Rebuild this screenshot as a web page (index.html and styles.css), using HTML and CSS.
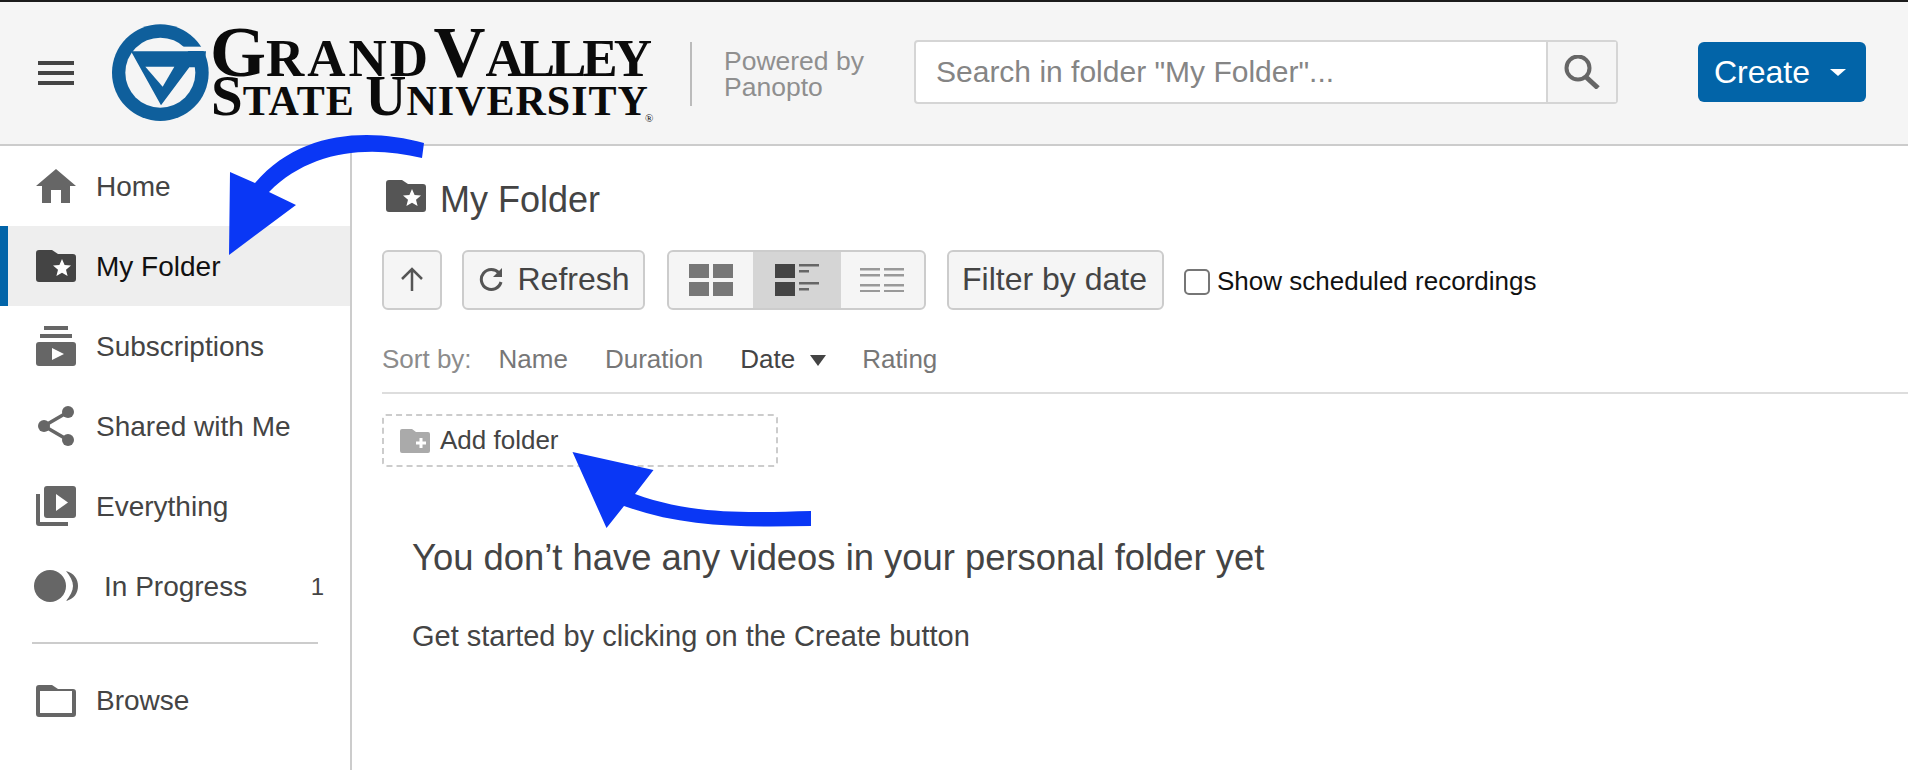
FILE: index.html
```html
<!DOCTYPE html>
<html lang="en">
<head>
    <meta charset="UTF-8">
    <meta name="viewport" content="width=device-width, initial-scale=1.0">
    <title>My Folder</title>
    <link rel="stylesheet" href="styles.css">
</head>
<body>
    <header class="topbar">
        <div class="hamburger"><span></span><span></span><span></span></div>
        <div class="logo">
            <svg class="logo-mark" viewBox="0 0 330 330" width="110" height="110">
                <circle cx="163" cy="164" r="145" fill="#0f5f9c"/>
                <circle cx="163" cy="164" r="105" fill="#f5f5f5"/>
                <rect x="215" y="86" width="100" height="13" fill="#f5f5f5"/>
                <polygon points="75,100 300,100 295,148 250,148 165,262" fill="#0f5f9c"/>
                <polygon points="118,146 205,146 170,206" fill="#f5f5f5"/>
            </svg>
            <div class="logo-text">
                <div class="logo-line"><span class="lg-big">G</span><span class="lg-rand">RAND</span> <span class="lg-big lg-v">V</span><span class="lg-alley">ALLEY</span></div>
                <div class="logo-line"><span class="lg-big2">S</span><span class="lg-small2">TATE</span> <span class="lg-big2 lg-u">U</span><span class="lg-small2">NIVERSITY</span><span class="lg-reg">®</span></div>
            </div>
        </div>
        <div class="powered">Powered by<br>Panopto</div>
        <div class="search">
            <input class="search-input" type="text" placeholder="Search in folder &quot;My Folder&quot;...">
            <div class="search-btn">
                <svg viewBox="0 0 36 34" width="36" height="34"><circle cx="14" cy="13" r="11.5" fill="none" stroke="#666" stroke-width="4"/><path d="M22 22 L34 33" stroke="#666" stroke-width="5" fill="none"/></svg>
            </div>
        </div>
        <button class="create">Create<span class="caret"></span></button>
    </header>

    <div class="layout">
        <nav class="sidebar">
            <a class="nav-item">
                <svg class="nav-icon" viewBox="0 0 40 34" width="40" height="34"><path d="M20 0 L40 17 H34 V34 H25 V21 H15 V34 H6 V17 H0 Z"/></svg>
                <span>Home</span>
            </a>
            <a class="nav-item active">
                <svg class="nav-icon" viewBox="0 0 40 32" width="40" height="32"><path d="M3 0 H16 L22 4 H37 a3 3 0 0 1 3 3 V29 a3 3 0 0 1 -3 3 H3 a3 3 0 0 1 -3 -3 V3 a3 3 0 0 1 3 -3 Z"/><polygon fill="#fff" points="26,9 28.6,15 35,15.5 30,19.8 31.6,26 26,22.8 20.4,26 22,19.8 17,15.5 23.4,15"/></svg>
                <span>My Folder</span>
            </a>
            <a class="nav-item">
                <svg class="nav-icon" viewBox="0 0 40 40" width="40" height="40"><rect x="8" y="0" width="24" height="4"/><rect x="4" y="8" width="32" height="4"/><rect x="0" y="16" width="40" height="24" rx="3"/><polygon fill="#fff" points="16,22 28,28 16,34"/></svg>
                <span>Subscriptions</span>
            </a>
            <a class="nav-item">
                <svg class="nav-icon share" viewBox="0 0 36 40" width="36" height="40"><path d="M30 6 L6 20 L30 34" fill="none" stroke="#666" stroke-width="3.5"/><circle cx="30" cy="6" r="6"/><circle cx="6" cy="20" r="6"/><circle cx="30" cy="34" r="6"/></svg>
                <span>Shared with Me</span>
            </a>
            <a class="nav-item">
                <svg class="nav-icon" viewBox="0 0 40 40" width="40" height="40"><rect x="8" y="0" width="32" height="32" rx="3"/><path d="M0 8 H4 V36 H32 V40 H3 a3 3 0 0 1 -3 -3 Z"/><polygon fill="#fff" points="20,8 32,16.5 20,25"/></svg>
                <span>Everything</span>
            </a>
            <a class="nav-item progress">
                <svg class="nav-icon" viewBox="0 0 44 32" width="44" height="32"><circle cx="16" cy="16" r="16"/><path d="M32 1 C40 3 44 9 44 16 C44 23 40 29 32 31 C36 26 39 21 39 16 C39 11 36 6 32 1 Z"/></svg>
                <span>In Progress</span>
                <span class="count">1</span>
            </a>
            <div class="nav-divider"></div>
            <a class="nav-item">
                <svg class="nav-icon" viewBox="0 0 40 32" width="40" height="32"><path fill-rule="evenodd" d="M3 0 H16 L22 4 H37 a3 3 0 0 1 3 3 V29 a3 3 0 0 1 -3 3 H3 a3 3 0 0 1 -3 -3 V3 a3 3 0 0 1 3 -3 Z M4 6 V28 H36 V6 Z"/></svg>
                <span>Browse</span>
            </a>
        </nav>

        <main class="content">
            <div class="title-row">
                <svg viewBox="0 0 40 32" width="40" height="32" fill="#555"><path d="M3 0 H16 L22 4 H37 a3 3 0 0 1 3 3 V29 a3 3 0 0 1 -3 3 H3 a3 3 0 0 1 -3 -3 V3 a3 3 0 0 1 3 -3 Z"/><polygon fill="#fff" points="26,9 28.6,15 35,15.5 30,19.8 31.6,26 26,22.8 20.4,26 22,19.8 17,15.5 23.4,15"/></svg>
                <h1>My Folder</h1>
            </div>

            <div class="toolbar">
                <button class="btn btn-up">
                    <svg viewBox="0 0 24 24" width="24" height="24"><path d="M12 2 V24 M2 12 L12 2 L22 12" fill="none" stroke="#555" stroke-width="2.5"/></svg>
                </button>
                <button class="btn btn-refresh">
                    <svg viewBox="0 0 26 24" width="26" height="24"><path d="M20 6 A10 10 0 1 0 22 15" fill="none" stroke="#555" stroke-width="3"/><polygon fill="#555" points="23,1 23,10 14,10"/></svg>
                    Refresh
                </button>
                <div class="views">
                    <div class="view">
                        <svg viewBox="0 0 44 32" width="44" height="32" fill="#777"><rect width="20" height="14"/><rect x="24" width="20" height="14"/><rect y="18" width="20" height="14"/><rect x="24" y="18" width="20" height="14"/></svg>
                    </div>
                    <div class="view view-on">
                        <svg viewBox="0 0 44 32" width="44" height="32" fill="#444"><rect width="20" height="14"/><rect y="18" width="20" height="14"/><g fill="#666"><rect x="24" width="20" height="2.5"/><rect x="24" y="6" width="10" height="2.5"/><rect x="24" y="18" width="20" height="2.5"/><rect x="24" y="24" width="10" height="2.5"/></g></svg>
                    </div>
                    <div class="view">
                        <svg viewBox="0 0 44 24" width="44" height="24" fill="#999"><rect width="20" height="2.5"/><rect x="24" width="20" height="2.5"/><rect y="6" width="20" height="2.5"/><rect x="24" y="6" width="20" height="2.5"/><rect y="16" width="20" height="2.5"/><rect x="24" y="16" width="20" height="2.5"/><rect y="22" width="20" height="2.5"/><rect x="24" y="22" width="20" height="2.5"/></svg>
                    </div>
                </div>
                <button class="btn btn-filter">Filter by date</button>
                <label class="scheduled"><input type="checkbox">Show scheduled recordings</label>
            </div>

            <div class="sort-row">
                <span class="sort-label">Sort by:</span>
                <span class="sort-opt">Name</span>
                <span class="sort-opt">Duration</span>
                <span class="sort-opt sort-on">Date<span class="sort-tri"></span></span>
                <span class="sort-opt">Rating</span>
            </div>

            <div class="add-folder">
                <svg viewBox="0 0 30 24" width="30" height="24"><path fill="#aaa" d="M2 0 H12 L16 3 H28 a2 2 0 0 1 2 2 V22 a2 2 0 0 1 -2 2 H2 a2 2 0 0 1 -2 -2 V2 a2 2 0 0 1 2 -2 Z"/><path d="M21 9 V19 M16 14 H26" stroke="#fff" stroke-width="3"/></svg>
                <span>Add folder</span>
            </div>

            <div class="empty">
                <h2>You don’t have any videos in your personal folder yet</h2>
                <p>Get started by clicking on the Create button</p>
            </div>
        </main>
    </div>

    <svg class="arrows" viewBox="0 0 1908 770" width="1908" height="770">
        <path fill="#0a37f5" d="M424 143 C370 128 300 130 255 183 L230 172 L229 255 L296 205 L269 192 C310 150 370 145 422 158 Z"/>
        <path fill="#0a37f5" d="M811 511 C740 513 690 514 635 494 L653.5 470 L572.5 452 L606.5 528 L624 506 C685 528 745 527 811 526 Z"/>
    </svg>
</body>
</html>
```

FILE: styles.css
```css
* {
    box-sizing: border-box;
}
html, body {
    height: 100%;
}
body {
    margin: 0;
    font-family: "Liberation Sans", Arial, sans-serif;
    color: #444;
    background-color: #fff;
    overflow: hidden;
    position: relative;
}
button {
    font-family: inherit;
}

/* top bar */
.topbar {
    display: flex;
    align-items: center;
    height: 146px;
    padding-left: 38px;
    padding-bottom: 2px;
    background-color: #f5f5f5;
    border-top: 2px solid #1c1c1c;
    border-bottom: 2px solid #ccc;
}
.hamburger {
    display: flex;
    flex-direction: column;
    gap: 6px;
    width: 36px;
    margin-top: 2px;
    margin-right: 32px;
}
.hamburger span {
    height: 4px;
    background-color: #444;
}
.logo {
    display: flex;
    align-items: center;
    width: 584px;
    margin-top: 2px;
}
.logo-mark {
    flex-shrink: 0;
}
.logo-text {
    font-family: "Liberation Serif", "Times New Roman", serif;
    font-weight: 700;
    color: #0b0b0b;
    white-space: nowrap;
    margin-left: -8px;
    margin-top: 2px;
}
.logo-line {
    height: 44px;
    line-height: 44px;
    font-size: 53px;
    padding-left: 2px;
}
.lg-big {
    font-size: 72px;
}
.lg-rand {
    letter-spacing: 3px;
}
.lg-v {
    margin-left: -11px;
}
.lg-alley {
    letter-spacing: -4px;
}
.logo-line:last-child {
    font-size: 42px;
    padding-left: 3px;
}
.lg-big2 {
    font-size: 57px;
}
.lg-small2 {
    letter-spacing: 1px;
}
.lg-reg {
    font-size: 11px;
    font-weight: 400;
    margin-left: -4px;
    vertical-align: -7px;
}
.powered {
    width: 224px;
    height: 64px;
    margin-top: 4px;
    padding-left: 32px;
    border-left: 2px solid #bbb;
    font-size: 26.5px;
    line-height: 26px;
    color: #8f8f8f;
    display: flex;
    align-items: center;
}
.search {
    display: flex;
    width: 704px;
    height: 64px;
    background-color: #fff;
    border: 2px solid #d5d5d5;
    border-radius: 4px;
}
.search-input {
    flex: 1;
    min-width: 0;
    border: none;
    outline: none;
    padding: 0 20px;
    font-family: inherit;
    font-size: 30px;
    background: transparent;
}
.search-input::placeholder {
    color: #858585;
    opacity: 1;
}
.search-btn {
    width: 70px;
    display: flex;
    align-items: center;
    justify-content: center;
    background-color: #f5f5f5;
    border-left: 2px solid #d5d5d5;
}
.create {
    display: flex;
    align-items: center;
    width: 168px;
    height: 60px;
    margin-left: 80px;
    padding: 0 0 0 16px;
    border: none;
    border-radius: 6px;
    background-color: #0264a8;
    color: #fff;
    font-size: 32px;
}
.caret {
    width: 0;
    height: 0;
    margin-left: 20px;
    border-top: 7px solid #fff;
    border-left: 8px solid transparent;
    border-right: 8px solid transparent;
}

/* page body */
.layout {
    display: flex;
    height: 624px;
}
.sidebar {
    width: 352px;
    flex-shrink: 0;
    border-right: 2px solid #ccc;
}
.nav-item {
    display: flex;
    align-items: center;
    height: 80px;
    padding-left: 36px;
    font-size: 28px;
    color: #444;
}
.nav-item span {
    margin-top: 2px;
}
.nav-icon {
    flex-shrink: 0;
    margin-right: 20px;
    fill: #666;
}
.nav-item.active {
    padding-left: 28px;
    border-left: 8px solid #0264a8;
    background-color: #eee;
    color: #111;
}
.nav-item.active .nav-icon {
    fill: #444;
}
.nav-icon.share {
    margin-left: 2px;
    margin-right: 22px;
}
.nav-item.progress {
    padding-left: 34px;
}
.nav-item.progress .nav-icon {
    margin-right: 26px;
}
.nav-item .count {
    margin-left: auto;
    margin-right: 26px;
    font-size: 24px;
}
.nav-divider {
    height: 2px;
    margin: 16px 32px 16px 32px;
    background-color: #ccc;
}
.nav-divider + .nav-item {
    height: 82px;
}
.nav-divider + .nav-item span {
    margin-top: 0;
}

.content {
    flex: 1;
    min-width: 0;
    padding-left: 30px;
}
.title-row {
    display: flex;
    align-items: center;
    height: 60px;
    margin: 24px 0 20px;
    padding-left: 4px;
}
.title-row svg {
    margin-bottom: 8px;
}
.title-row h1 {
    margin: 0 0 0 14px;
    font-size: 36px;
    font-weight: 400;
}
.toolbar {
    display: flex;
    align-items: center;
    height: 60px;
}
.btn {
    display: flex;
    align-items: center;
    justify-content: center;
    height: 60px;
    padding: 0 0 2px;
    background-color: #f5f5f5;
    border: 2px solid #ccc;
    border-radius: 6px;
    color: #444;
    font-size: 32px;
}
.btn-up {
    width: 60px;
}
.btn-refresh {
    width: 183px;
    margin-left: 20px;
    padding-left: 2px;
    gap: 12px;
}
.views {
    display: flex;
    width: 259px;
    height: 60px;
    margin-left: 22px;
    background-color: #f5f5f5;
    border: 2px solid #ccc;
    border-radius: 6px;
    overflow: hidden;
}
.view {
    flex: 1;
    display: flex;
    align-items: center;
    justify-content: center;
}
.view-on {
    flex: 0 0 88px;
    background-color: #d5d5d5;
}
.btn-filter {
    width: 217px;
    margin-left: 21px;
    padding-right: 2px;
}
.scheduled {
    display: flex;
    align-items: center;
    margin-left: 20px;
    padding-top: 2px;
    font-size: 26px;
    color: #111;
}
.scheduled input {
    appearance: none;
    width: 26px;
    height: 26px;
    margin: 1px 7px 0 0;
    background-color: #fff;
    border: 2px solid #767676;
    border-radius: 5px;
}
.sort-row {
    display: flex;
    align-items: center;
    height: 61px;
    margin-top: 23px;
    padding-bottom: 6px;
    border-bottom: 2px solid #ddd;
    font-size: 26px;
    color: #777;
}
.sort-label {
    margin-right: 27px;
    color: #8c8c8c;
}
.sort-opt {
    display: flex;
    align-items: center;
    margin-right: 37px;
}
.sort-on {
    color: #444;
    margin-right: 36px;
}
.sort-tri {
    width: 0;
    height: 0;
    margin-left: 15px;
    margin-top: 2px;
    border-top: 11px solid #444;
    border-left: 8.5px solid transparent;
    border-right: 8.5px solid transparent;
}
.add-folder {
    display: flex;
    align-items: center;
    width: 396px;
    height: 53px;
    margin-top: 20px;
    padding-left: 16px;
    border: 2px dashed #ccc;
    border-radius: 4px;
    font-size: 26px;
    color: #444;
}
.add-folder span {
    margin-left: 10px;
}
.empty {
    padding-left: 30px;
}
.empty h2 {
    margin: 61px 0 28px;
    font-size: 36.4px;
    line-height: 60px;
    font-weight: 400;
}
.empty p {
    margin: 0;
    font-size: 29px;
    line-height: 40px;
}

/* callout arrows drawn over the page */
.arrows {
    position: absolute;
    top: 0;
    left: 0;
    pointer-events: none;
}
```
